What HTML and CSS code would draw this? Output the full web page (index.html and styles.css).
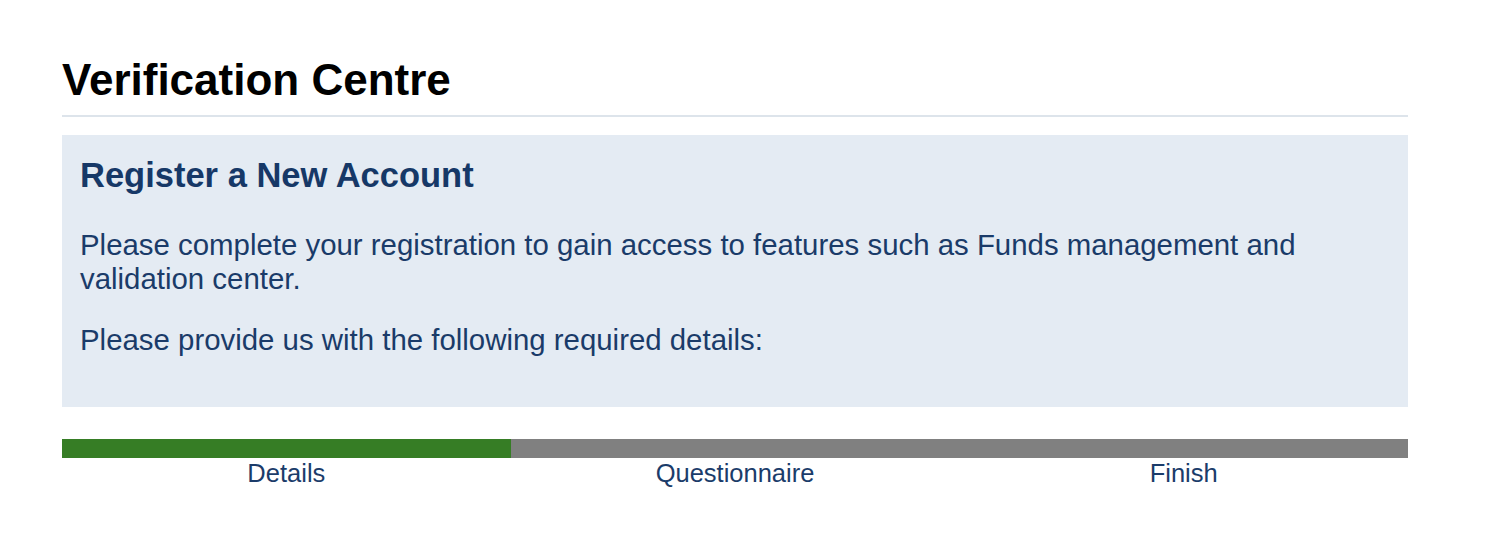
FILE: index.html
```html
<!DOCTYPE html>
<html lang="en">
<head>
<meta charset="utf-8">
<title>Verification Centre</title>
<link rel="stylesheet" href="styles.css">
</head>
<body>
<main class="page">
  <h1 class="page-title">Verification Centre</h1>
  <section class="panel">
    <h2 class="panel-title">Register a New Account</h2>
    <p class="panel-text">Please complete your registration to gain access to features such as Funds management and validation center.</p>
    <p class="panel-text panel-text-last">Please provide us with the following required details:</p>
  </section>
  <div class="steps">
    <div class="step step-done">
      <div class="step-bar"></div>
      <div class="step-label">Details</div>
    </div>
    <div class="step">
      <div class="step-bar"></div>
      <div class="step-label">Questionnaire</div>
    </div>
    <div class="step">
      <div class="step-bar"></div>
      <div class="step-label">Finish</div>
    </div>
  </div>
</main>
</body>
</html>
```

FILE: styles.css
```css
html, body {
  margin: 0;
  padding: 0;
  background: #ffffff;
}

body {
  font-family: "Liberation Sans", Arial, Helvetica, sans-serif;
}

.page {
  width: 1346px;
  margin-left: 62px;
  padding-top: 55px;
}

.page-title {
  margin: 0;
  font-size: 44px;
  font-weight: bold;
  line-height: 49px;
  color: #000000;
  padding-bottom: 11px;
  border-bottom: 2px solid #dde4eb;
}

.panel {
  margin-top: 18px;
  background: #e4ebf3;
  padding: 21px 18px 50px 18px;
  color: #1a3b69;
}

.panel-title {
  margin: 0 0 33px 0;
  font-size: 34.5px;
  font-weight: bold;
  line-height: 39px;
  color: #163867;
}

.panel-text {
  margin: 0 0 27px 0;
  font-size: 29.4px;
  line-height: 34px;
}

.panel-text-last {
  margin-bottom: 0;
}

.steps {
  margin-top: 32px;
  display: flex;
}

.step {
  flex: 1 1 0;
  display: flex;
  flex-direction: column;
}

.step-bar {
  height: 19px;
  background: #808080;
}

.step-done .step-bar {
  background: #367d25;
}

.step-label {
  text-align: center;
  font-size: 25.5px;
  line-height: 30px;
  color: #1b3c6a;
}
```
